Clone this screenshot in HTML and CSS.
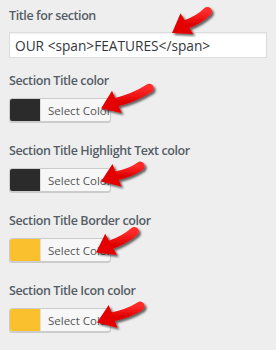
FILE: index.html
```html
<!DOCTYPE html>
<html>
<head>
<meta charset="utf-8">
<link rel="stylesheet" href="styles.css">
</head>
<body>
<div class="page">
  <div class="field field-text">
    <label class="label">Title for section</label>
    <input class="text-input" type="text" value="OUR <span>FEATURES</span>">
  </div>
  <div class="field">
    <div class="label">Section Title color</div>
    <button class="color-btn"><span class="swatch swatch-dark"></span><span class="btn-text">Select Color</span></button>
  </div>
  <div class="field">
    <div class="label">Section Title Highlight Text color</div>
    <button class="color-btn"><span class="swatch swatch-dark"></span><span class="btn-text">Select Color</span></button>
  </div>
  <div class="field">
    <div class="label">Section Title Border color</div>
    <button class="color-btn"><span class="swatch swatch-yellow"></span><span class="btn-text">Select Color</span></button>
  </div>
  <div class="field">
    <div class="label">Section Title Icon color</div>
    <button class="color-btn"><span class="swatch swatch-yellow"></span><span class="btn-text">Select Color</span></button>
  </div>

  <svg class="defs" width="0" height="0">
    <defs>
      <filter id="sh" x="-30%" y="-30%" width="160%" height="160%">
        <feDropShadow dx="2" dy="2" stdDeviation="1" flood-color="#000" flood-opacity="0.6"/>
      </filter>
      <linearGradient id="rg" x1="0" y1="0" x2="0" y2="1">
        <stop offset="0" stop-color="#ff2a2a"/>
        <stop offset="1" stop-color="#dd0000"/>
      </linearGradient>
    </defs>
  </svg>

  <svg class="arrow a1" width="64" height="48" viewBox="0 0 64 48">
    <g filter="url(#sh)">
      <path d="M16 24.8 Q29.6 20.2 38.4 11.5" fill="none" stroke="url(#rg)" stroke-width="9" stroke-linecap="round"/>
      <polygon points="3,33 11.5,13.3 24.2,34" fill="#e40000"/>
    </g>
  </svg>
  <svg class="arrow a2" width="64" height="48" viewBox="0 0 64 48">
    <g filter="url(#sh)">
      <path d="M17 26.5 Q36.2 21.8 51.2 12.2" fill="none" stroke="url(#rg)" stroke-width="9" stroke-linecap="round"/>
      <polygon points="3,32.5 14,14.7 23.6,37" fill="#e40000"/>
    </g>
  </svg>
  <svg class="arrow a3" width="64" height="48" viewBox="0 0 64 48">
    <g filter="url(#sh)">
      <path d="M17 27 Q31.7 24.5 42.2 17.1" fill="none" stroke="url(#rg)" stroke-width="9" stroke-linecap="round"/>
      <polygon points="3,32.5 14.5,15 23.4,37.5" fill="#e40000"/>
    </g>
  </svg>
  <svg class="arrow a4" width="64" height="48" viewBox="0 0 64 48">
    <g filter="url(#sh)">
      <path d="M16.3 25.3 Q31.1 20.5 41.4 11.4" fill="none" stroke="url(#rg)" stroke-width="9" stroke-linecap="round"/>
      <polygon points="3,32.5 12.2,13.7 23.9,34.9" fill="#e40000"/>
    </g>
  </svg>
  <svg class="arrow a5" width="64" height="48" viewBox="0 0 64 48">
    <g filter="url(#sh)">
      <path d="M17.2 27 Q33.7 24 46.2 16.1" fill="none" stroke="url(#rg)" stroke-width="9" stroke-linecap="round"/>
      <polygon points="3,32.5 14.7,15 23.4,37.7" fill="#e40000"/>
    </g>
  </svg>
</div>
</body>
</html>
```

FILE: styles.css
```css
html, body {
  margin: 0;
  padding: 0;
  background: #eeeeee;
}
.page {
  position: relative;
  width: 276px;
  height: 350px;
  box-sizing: border-box;
  padding: 7px 9px 0 9px;
  font-family: "Open Sans", "Liberation Sans", sans-serif;
  overflow: hidden;
}
.field {
  display: flex;
  flex-direction: column;
  align-items: flex-start;
  margin-bottom: 20px;
}
.field-text {
  margin-bottom: 14px;
}
.label {
  display: block;
  font-size: 12.5px;
  letter-spacing: -0.4px;
  line-height: 18px;
  font-weight: 600;
  color: #555d66;
  margin-bottom: 8px;
  white-space: nowrap;
}
.field-text .label {
  margin-bottom: 7px;
}
.text-input {
  box-sizing: border-box;
  width: 258px;
  height: 26px;
  margin: 0;
  padding: 0 5px;
  border: 1px solid #dddddd;
  background: #ffffff;
  font-family: "Open Sans", "Liberation Sans", sans-serif;
  font-size: 13.7px;
  color: #32373c;
  box-shadow: inset 0 1px 2px rgba(0,0,0,0.07);
  outline: none;
}
.color-btn {
  box-sizing: border-box;
  display: flex;
  align-items: stretch;
  width: 102px;
  height: 24px;
  margin: 0;
  padding: 0;
  border: 1px solid #cccccc;
  border-radius: 3px;
  background: #f7f7f7;
  box-shadow: 0 1px 0 #cccccc;
  overflow: hidden;
  font-family: "Open Sans", "Liberation Sans", sans-serif;
  cursor: pointer;
}
.swatch {
  width: 30px;
  flex: none;
}
.swatch-dark {
  background: #2b2b2b;
}
.swatch-yellow {
  background: #fbc02d;
}
.btn-text {
  flex: 1;
  display: flex;
  align-items: center;
  padding-left: 7px;
  border-left: 1px solid #dddddd;
  font-size: 11.5px;
  color: #555555;
  white-space: nowrap;
}
.defs {
  position: absolute;
  width: 0;
  height: 0;
}
.arrow {
  position: absolute;
  overflow: visible;
}
.a1 { left: 169px; top: 0px; }
.a2 { left: 98px; top: 76px; }
.a3 { left: 98px; top: 149px; }
.a4 { left: 93px; top: 220px; }
.a5 { left: 94px; top: 290px; }
```
